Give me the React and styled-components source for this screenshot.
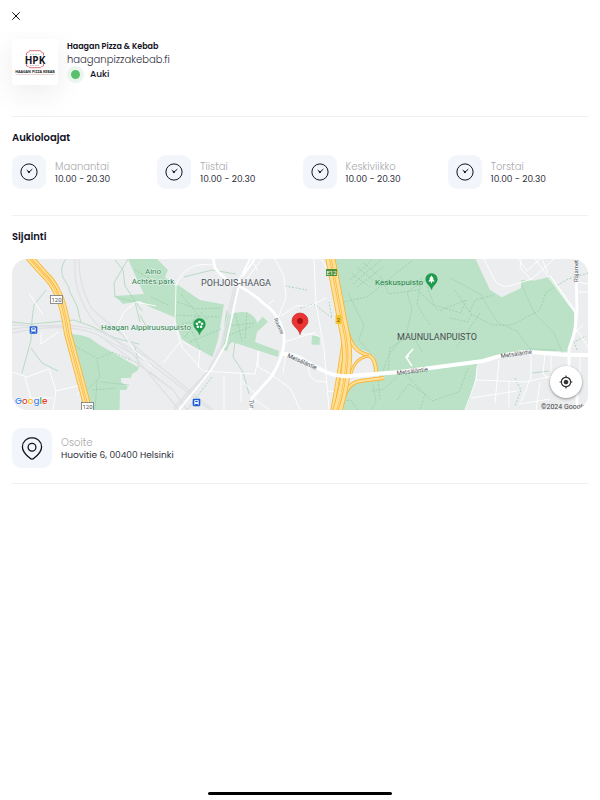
import React from "react";
import styled, { createGlobalStyle } from "styled-components";
import { MdMyLocation } from "react-icons/md";

const hours = [
  { day: "Maanantai", time: "10.00 - 20.30" },
  { day: "Tiistai", time: "10.00 - 20.30" },
  { day: "Keskiviikko", time: "10.00 - 20.30" },
  { day: "Torstai", time: "10.00 - 20.30" },
];

function CloseIcon() {
  return (
    <svg width="8" height="8" viewBox="0 0 8 8" stroke="#111">
      <path d="M.3 .3l7.400 7.400M7.700 .3l-7.400 7.400" />
    </svg>
  );
}

function ClockIcon() {
  return (
    <svg width="18" height="18" viewBox="0 0 18 18" fill="none" stroke="#12121f">
      <circle cx="9" cy="9" r="8.100" />
      <path d="M6.700 7l2.200 2.200 3.400-3" />
      <circle cx="8.900" cy="9" r=".7" fill="#12121f" />
    </svg>
  );
}

function PinIcon() {
  return (
    <svg
      width="22"
      height="24"
      viewBox="0 0 22 24"
      fill="none"
      stroke="#12121f"
      strokeWidth="1.300"
    >
      <path d="M11 1.700c-5.400 0-9.600 4.100-9.600 9.200 0 5.200 4.300 8.600 7.700 11.400 1.200 1 2.600 1 3.800 0 3.400-2.800 7.700-6.200 7.700-11.400 0-5.100-4.200-9.200-9.600-9.200z" />
      <circle cx="11" cy="11.300" r="3.900" />
    </svg>
  );
}

function Logo() {
  return (
    <svg width="46" height="46" viewBox="0 0 46 46" role="img">
      <title>Haagan Pizza &amp; Kebab</title>
      <g fill="none" stroke="#d9676a" strokeWidth=".9">
        <path d="M14.500 16.500V14q2.500-.3 3-2.300h11q.5 2 3 2.300v2.500" />
        <path d="M14.500 25v2q2.500.3 3 1.700h11q.5-1.400 3-1.700v-2" />
      </g>
      <g stroke="#999" strokeWidth=".6">
        <path d="M18 15.500h10M18 26.500h10" strokeDasharray="1.500 1" />
      </g>
      <LogoText x="23" y="24.500" $size={10}>HPK</LogoText>
      <LogoText x="23" y="34.300" $size={3.6}>HAAGAN PIZZA KEBAB</LogoText>
      <path d="M3.500 35.500h39" stroke="#d3aaaa" strokeWidth=".5" />
    </svg>
  );
}

function Highway({ d, width = 8 }) {
  return (
    <g fill="none">
      <path d={d} stroke="#f8b739" strokeWidth={width} />
      <path d={d} stroke="#ffe09a" strokeWidth={width - 1.8} />
      {width > 5 && <path d={d} stroke="#f8b739" strokeWidth="2.400" />}
      {width > 5 && <path d={d} stroke="#ffe09a" strokeWidth="1" />}
    </g>
  );
}

function ParkMarker({ x, y, children }) {
  return (
    <g transform={`translate(${x} ${y})`}>
      <path
        d="M0 9.800C-.8 5.500-5.800 4-5.800-.8a5.800 5.800 0 1 1 11.600 0C5.800 4 .8 5.500 0 9.800z"
        fill="#1e9c4d"
        stroke="#168142"
        strokeWidth=".4"
      />
      {children}
    </g>
  );
}

function TrainStop({ x, y }) {
  return (
    <g transform={`translate(${x} ${y})`}>
      <rect x="-3.800" y="-3.800" width="7.600" height="7.600" rx="1" fill="#1c5bd8" />
      <rect x="-2.200" y="-2.600" width="4.400" height="4.200" rx=".9" fill="#fff" />
      <rect x="-1.300" y="-1.700" width="2.600" height="1.300" fill="#1c5bd8" />
      <path d="M-1.500 1.500l-1 1.300M1.500 1.500l1 1.300" stroke="#fff" strokeWidth=".7" />
    </g>
  );
}

function MapDrawing() {
  return (
    <MapSvg viewBox="12 259 576 151" preserveAspectRatio="xMidYMid slice">
      <rect x="-600" y="100" width="1800" height="500" fill="#ebedef" />

      {/* parks */}
      <g fill="#bbe2c6">
        <path d="M127.700 258H156l12 12-3 7 11 9 2-1 22 15 24 4.500-6 35.500-5.500 17-30.500-17-8-23-24-10-10-6-17 3-8-8 29-2-9-19z" />
        <path d="M226.700 310l3.500 5q8-4.500 18-2 7 3 9 10l5.500-6.300 5.300 5-11 10.300-2 10 24 9-1 6-46-15-3 3-2 6-6-2 3-14 1-17z" />
        <path d="M71.700 334q12 1 18 4l10 7 39.300 22.700L137 371l-5 3-1 4h-10v4l7 5-2 3h-6l-.5 21H90z" />
        <path d="M333 258h142l15 32 11.700 7.300L521 288v-8l14 .5 15-3.800L574 310v14l-5 28q-17-2-42 0l-50 11v6q-3 21-12 42H338l10-25q14-7 32-8l-3-5q1-18-9-21-14-3-20-17z" />
        <path d="M312 335.500l8 1-.5 8.500-8-.5z" />
      </g>

      {/* footpaths */}
      <g fill="none" stroke="#a4d3b2" strokeWidth=".7">
        <path d="M66 259c-12 16 5 26 3 31l8 16 4 17M46 290l-12 15-2 15-1 20-9 33M31 348l11 15 16 8M12 322l20 2 42-4 19 7 22 11 24 6M128 259l-14 24 1 14 20 5 5 20M139 367l-4-20-22-21M82 410v-15l18-18-3-17M97 380l-2 30M100 382l29 3M140 315l8 15M115 260l8 10 2 16 17 25" />
        <path d="M348 293l16 32-5 15 16 19-1 22M450 278l30 16 18 29 19 8 13 18 27 1M522 286l13 28 19 19 9 21M373 384l3 18-5 8M235 342l-2 15 10 15 6 22M425 280l-18 12 5 17-5 22-19 25-5 15" />
        <path d="M532 373l17-2M236 274l-24-4-28 7" />
      </g>
      <g fill="none" stroke="#92c9a5" strokeWidth=".7" strokeDasharray="2 1.500">
        <path d="M181 294l16 20-7 13 10 22M178 302l20 7 24-1M176 315l43 2M175 326l34-8M185 337l17-25M190 342l31-13M228 326l27-3M229 335l24-9M235 313l7 28M247 312l-2 27M151 297l17 8M135 270l28 16" />
        <path d="M350 280l23-21M353 284l29-25M357 287l26-20M352 274l18 13M358 268l16 13M364 263l14 12" />
        <path d="M343 302l24-5 22-18 23-18M380 276l9 18 29-4 21 21 27-11M421 278l-4 27 14 21M466 300l-5 13-27-8-7-19M388 373l2-25 22-14 10 18M455 290l16 24 21 11h20l28-15 6-18 22-13 20-6M470 312l5-12 19-5M450 318l18 4 4-9M358 410l-7-10-9 1M378 377l2 23M372 391l12-2 13-12M405 374l27 27 27-9 9-24M397 400l12-16 16 10-5 16M480 313l-24 35M515 378l6 12-6 16M577 350l-3-8 12-6" />
        <path d="M75 346l23 13 14-7 24 10M92 390l25-2" />
        <path d="M212 377l-25 33M150 372l22 17M300 308l14-4 18 14-3-16M285 286l22 4" />
      </g>

      {/* railway */}
      <g fill="none" stroke="#dfe1e4" strokeWidth="1.300">
        <path d="M12 333c35-7 60-8 84 1l55 30 49 38 10 8" />
        <path d="M12 329c38-5 61-6 87 2l53 29 61 50" />
        <path d="M75 259c-1 20 2 35 12 52 11 19 31 31 44 41l48 58" />
        <path d="M79 259c0 20 4 35 13 50l58 50M236 287l-13 58-13 26-36 39M234 287l-13 58-13 26-34 36" />
        <path d="M12 325l55 2M105 340l68 50 14 20" />
      </g>

      {/* side streets */}
      <g fill="none" stroke="#fff" strokeWidth=".9" strokeLinejoin="round">
        <path d="M12 372l15 5 22-8 7 22 30-7M25 377l6 21h22M29 293l14 22M41 333v11l17-12M56 391l-3 19M84 384l-7 11" />
        <path d="M118 324l6-12 12-10 20 4M118 324l16 26 18 17M204 371l51 3 4-23M203 371l-21-24-7-22 1-40q10-24 36-20M200 350l-2 18M163 363l17-21M182 340l9 7" />
        <path d="M258 351v16l15 8M241 374v28M224 376v34M252 398l18 12M256 394l-14-13M272 375l19 14 9 21M286 354l-3 19" />
        <path d="M250 259l-14 26M262 259l-22 29M251 259l7 12M275 259l9 17 2 21-8 22M269 304l5-4M281 316l15-10h14l16-8M314 259l2 45 8 45 5 61M321 259l8 13M284 342l32-10" />
        <path d="M309 364q-2 13 7 17l11 1M301 334h13l6 3M328 391l11 1" />
        <path d="M484 259l11 22q7 8 18 4l19-6 22-20M535 259l43 58M521 259l-1 9 11 11M542 259l6 14M576 292h12M577 282l11 2M575 311v20M577 330l11 17M580 355v20M575 332l8-7M518 259l9 12 13-12" />
        <path d="M477 366l-1 14-11 30M531 354v23l-10 25M476 380l49 2 28-6M499 360l-4 43M509 382v25M545 354l-2 20 11 8M471 398l46-7M540 382l-4 28M551 356v15M519 404l31-5" />
        <path d="M413 349l-7 8 6 9M406 357l3-1" strokeWidth="1.500" />
      </g>

      {/* main streets */}
      <g fill="none" stroke="#fff" strokeLinejoin="round">
        <path
          d="M213 258l2 10q8 11 22 17 16 8 26 18 13 9 17 20 5 10 4 20-1 14-12 33l-20 22-2 14"
          strokeWidth="2.900"
        />
        <path d="M236 285l4-5-14 64-15 26-32 40" strokeWidth="1.800" />
        <path d="M243 273l7-14M242 277l13-18" strokeWidth="2" />
        <path d="M576 258l1 53-2 20-6 18v25l8 17v19" strokeWidth="2.900" />
        <path d="M550 276l25 35" strokeWidth="1.500" />
      </g>

      <Highway d="M29 257l15 17q9 8 14 20 6 12 10 40l21 78" />
      <Highway d="M344 339q-6 42-12 73" width={4} />
      <Highway d="M348 333q5 19 20 22 8 3 8 18" width={4} />
      <Highway d="M350 378q3-20 19-22" width={3} />
      <Highway d="M339 411l7-19q4-9 14-11l24-3" width={4} />
      <Highway d="M330 257q8 40 12 63 6 25 5 40-2 27-10 52" width={10} />

      <path
        d="M283 354q10 0 17 4 13 8 26 14 12 5 24 4l50-4 83-11q28-9 48-9l36 3h21"
        fill="none"
        stroke="#fff"
        strokeWidth="4"
      />

      {/* road numbers */}
      <g fill="#fff" stroke="#777" strokeWidth=".8">
        <rect x="50.500" y="295.500" width="12" height="8" />
        <rect x="81.500" y="402.500" width="12" height="8" />
      </g>
      <rect x="326" y="269" width="11" height="7" fill="#4f8f35" />
      <rect x="335.500" y="315" width="6" height="9" rx="1" fill="#f4c430" />
      <MapText x="56.500" y="302" $size={6} $middle>120</MapText>
      <MapText x="87.500" y="409" $size={6} $middle>120</MapText>
      <MapText x="331.500" y="275" $size={6} $middle $color="#fff">E12</MapText>
      <MapText x="338.500" y="322" $size={6} $middle $color="#6b4c00">2</MapText>

      <TrainStop x={33.5} y={330} />
      <TrainStop x={196.5} y={402.5} />

      {/* place names */}
      <MapText x="153" y="274" $size={8} $middle $halo $color="#27834a">Aino</MapText>
      <MapText x="153" y="284" $size={8} $middle $halo $color="#27834a">Achtés park</MapText>
      <MapText x="191" y="330" $size={8} $end $halo $color="#27834a">
        Haagan Alppiruusupuisto
      </MapText>
      <MapText x="423" y="285" $size={8} $end $color="#27834a">Keskuspuisto</MapText>
      <MapText x="236" y="286" $size={9} $middle $halo>POHJOIS-HAAGA</MapText>
      <MapText x="437" y="340" $size={9} $middle>MAUNULANPUISTO</MapText>
      <MapText $size={5} transform="translate(274 319) rotate(66)" $halo>Ruuntie</MapText>
      <MapText $size={6} transform="translate(287 357) rotate(24)" $halo>Metsäläntie</MapText>
      <MapText $size={6} transform="translate(397 375) rotate(-7)">Metsäläntie</MapText>
      <MapText $size={6} transform="translate(501 358) rotate(-8)">Metsäläntie</MapText>
      <MapText $size={6} transform="translate(578 282) rotate(-90)">Rajamet</MapText>
      <MapText $size={6} transform="translate(249 400) rotate(83)">Tur</MapText>

      <ParkMarker x={199.5} y={325}>
        <g fill="#fff">
          <circle cx="0" cy="-3" r="1.300" />
          <circle cx="-2.600" cy="-1.200" r="1.300" />
          <circle cx="2.600" cy="-1.200" r="1.300" />
          <circle cx="-1.600" cy="1.700" r="1.300" />
          <circle cx="1.600" cy="1.700" r="1.300" />
        </g>
      </ParkMarker>
      <ParkMarker x={431.5} y={280}>
        <path d="M0-4.500l2.400 3.300h-1L3.200 1.600H.6v1.600H-.6V1.600h-2.600l1.800-2.800h-1z" fill="#fff" />
      </ParkMarker>

      <path
        d="M300 334.500c-1-6-8-8-8-13.500a8 8 0 1 1 16 0c0 5.500-7 7.500-8 13.500z"
        fill="#ea3535"
        stroke="#c5221f"
        strokeWidth=".6"
      />
      <circle cx="300" cy="321" r="2.900" fill="#a50e0e" />

      <GoogleText x="15" y="404">
        <tspan fill="#4285f4">G</tspan>
        <tspan fill="#ea4335">o</tspan>
        <tspan fill="#fbbc05">o</tspan>
        <tspan fill="#4285f4">g</tspan>
        <tspan fill="#34a853">l</tspan>
        <tspan fill="#ea4335">e</tspan>
      </GoogleText>
      <MapText x="541" y="409" $size={7} $color="#444">©2024 Google</MapText>
    </MapSvg>
  );
}

export default function App() {
  return (
    <>
      <GlobalStyle />
      <Page>
        <TopBar>
          <CloseButton type="button" aria-label="Sulje">
            <CloseIcon />
          </CloseButton>
        </TopBar>

        <Header>
          <LogoCard>
            <Logo />
          </LogoCard>
          <Info>
            <Name>Haagan Pizza &amp; Kebab</Name>
            <Site href="#">haaganpizzakebab.fi</Site>
            <Status>
              <StatusDot />
              Auki
            </Status>
          </Info>
        </Header>

        <Content>
          <Section $bottom={26}>
            <Title>Aukioloajat</Title>
            <HoursList>
              {hours.map((item) => (
                <HoursItem key={item.day}>
                  <IconBox $size={34}>
                    <ClockIcon />
                  </IconBox>
                  <Texts>
                    <Label>{item.day}</Label>
                    <Value>{item.time}</Value>
                  </Texts>
                </HoursItem>
              ))}
            </HoursList>
          </Section>

          <Section $bottom={15}>
            <Title>Sijainti</Title>
            <MapCard>
              <MapDrawing />
              <LocateButton type="button" aria-label="Paikanna">
                <MdMyLocation size={14} />
              </LocateButton>
            </MapCard>
            <Address>
              <IconBox $size={40}>
                <PinIcon />
              </IconBox>
              <Texts>
                <Label>Osoite</Label>
                <Value>Huovitie 6, 00400 Helsinki</Value>
              </Texts>
            </Address>
          </Section>
        </Content>

        <HomeBar />
      </Page>
    </>
  );
}

const GlobalStyle = createGlobalStyle`
  * {
    box-sizing: border-box;
  }
  body {
    margin: 0;
    background: #fff;
    color: #12121f;
    font-family: Poppins, Inter, sans-serif;
  }
`;

const Page = styled.main`
  display: flex;
  flex-direction: column;
  min-height: 100vh;
`;

const TopBar = styled.div`
  display: flex;
  align-items: center;
  height: 32px;
  padding: 0 8px;
`;

const CloseButton = styled.button`
  display: flex;
  align-items: center;
  justify-content: center;
  width: 16px;
  height: 16px;
  padding: 0;
  border: none;
  background: none;
  cursor: pointer;
`;

const Header = styled.header`
  display: flex;
  align-items: flex-start;
  gap: 9px;
  height: 84px;
  padding: 7px 12px 0;
  overflow: hidden;
`;

const LogoCard = styled.div`
  display: flex;
  background: #fff;
  border-radius: 2px;
  box-shadow: 0 8px 30px rgba(0, 0, 0, 0.08);
`;

const LogoText = styled.text`
  font-family: "Open Sans", sans-serif;
  font-size: ${(p) => p.$size}px;
  font-weight: 700;
  text-anchor: middle;
  fill: #151522;
`;

const Info = styled.div`
  display: flex;
  flex-direction: column;
  padding-top: 2px;
`;

const Name = styled.h1`
  margin: 0;
  font-size: 8px;
  line-height: 12px;
  font-weight: 600;
`;

const Site = styled.a`
  color: #2d2d3a;
  font-size: 10px;
  font-weight: 300;
  line-height: 13px;
  text-decoration: none;
`;

const Status = styled.div`
  display: flex;
  align-items: center;
  gap: 6px;
  font-size: 9px;
  line-height: 17px;
  font-weight: 500;
`;

const StatusDot = styled.span`
  width: 17px;
  height: 17px;
  border: 4px solid #eaf6ed;
  border-radius: 50%;
  background: #5bc06c;
`;

const Content = styled.div`
  padding: 0 12px;
`;

const Section = styled.section`
  padding: 13px 0 ${(p) => p.$bottom}px;
  border-top: 1px solid #f0f0f1;

  &:last-child {
    border-bottom: 1px solid #f0f0f1;
  }
`;

const Title = styled.h2`
  margin: 0;
  font-size: 10px;
  line-height: 16px;
  font-weight: 600;
`;

const HoursList = styled.ul`
  display: grid;
  grid-template-columns: repeat(4, 1fr);
  gap: 5px;
  margin: 9px 0 0;
  padding: 0;
  list-style: none;
`;

const HoursItem = styled.li`
  display: flex;
  align-items: center;
  gap: 9px;
`;

const IconBox = styled.div`
  display: flex;
  align-items: center;
  justify-content: center;
  width: ${(p) => p.$size}px;
  height: ${(p) => p.$size}px;
  border-radius: 9px;
  background: #f2f6fa;
`;

const Texts = styled.div`
  padding-top: 2px;
`;

const Label = styled.div`
  color: #a9a9ac;
  font-size: 10px;
  font-weight: 300;
  line-height: 13px;
`;

const Value = styled.div`
  color: #2d2d3a;
  font-size: 9px;
  line-height: 13px;
`;

const MapCard = styled.div`
  position: relative;
  height: 151px;
  margin-top: 14px;
  border-radius: 15px;
  overflow: hidden;
`;

const MapSvg = styled.svg`
  display: block;
  width: 100%;
  height: 100%;
`;

const MapText = styled.text`
  font-family: Roboto, sans-serif;
  font-size: ${(p) => p.$size}px;
  fill: ${(p) => p.$color || "#4a4e54"};
  text-anchor: ${(p) => (p.$middle ? "middle" : p.$end ? "end" : "start")};
  paint-order: stroke;
  stroke: ${(p) => (p.$halo ? "#f4f6f7" : "none")};
  stroke-width: 1px;
`;

const GoogleText = styled.text`
  font-family: Poppins, Lato, sans-serif;
  font-size: 9px;
  font-weight: 500;
  paint-order: stroke;
  stroke: #fff;
  stroke-width: 1px;
`;

const LocateButton = styled.button`
  position: absolute;
  right: 6px;
  bottom: 12px;
  display: flex;
  align-items: center;
  justify-content: center;
  width: 32px;
  height: 32px;
  padding: 0;
  border: none;
  border-radius: 50%;
  background: #fff;
  color: #333;
  box-shadow: 0 1px 3px rgba(0, 0, 0, 0.4);
  cursor: pointer;
`;

const Address = styled.div`
  display: flex;
  align-items: center;
  gap: 9px;
  margin-top: 18px;
`;

const HomeBar = styled.div`
  width: 184px;
  height: 3px;
  margin: auto auto 5px;
  border-radius: 2px;
  background: #000;
`;
